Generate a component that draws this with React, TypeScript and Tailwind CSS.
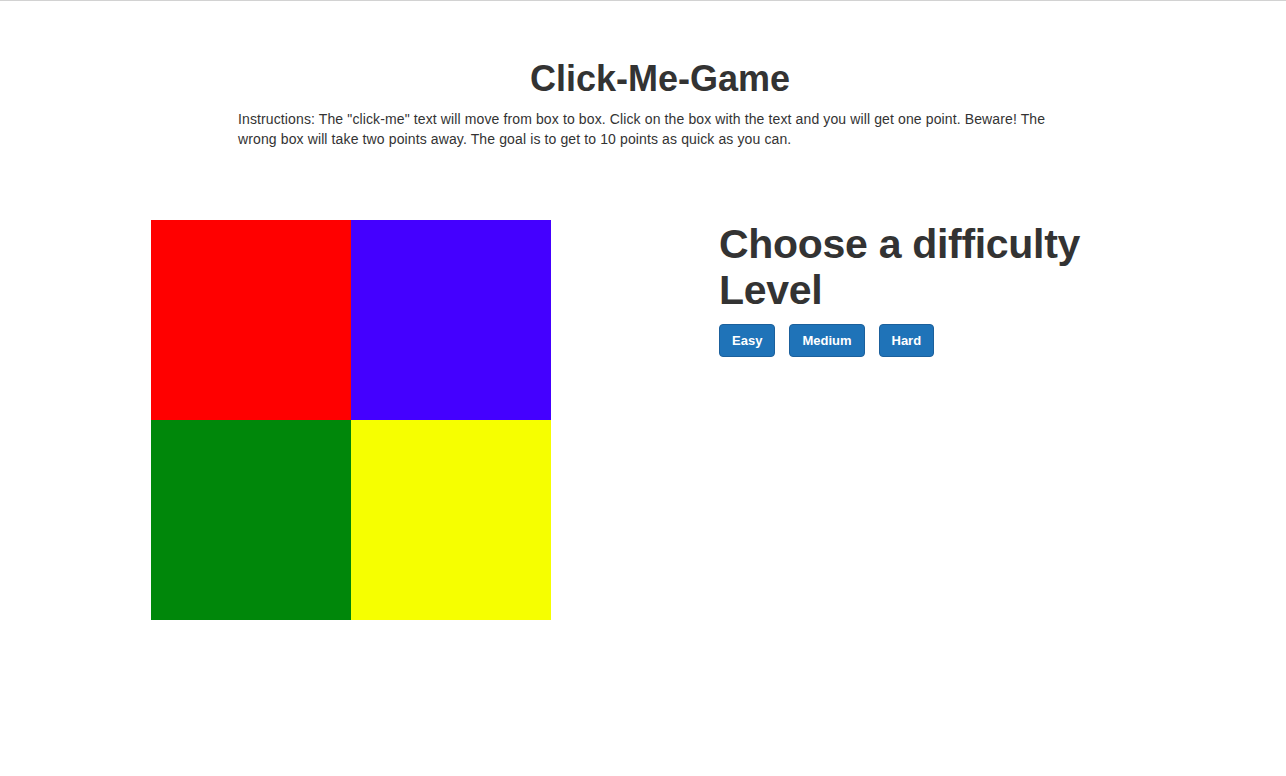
import React from "react";

export default function App() {
  const font = { fontFamily: '"Liberation Sans", Arial, Helvetica, sans-serif' };
  return (
    <div className="min-h-[776px] w-full bg-white text-[#333333] border-t border-[#d2d2d2]" style={font}>
      <div className="w-[844px] pt-[58px] ml-[238px]">
        <h1 className="text-center text-[36px] leading-[40px] font-bold m-0">Click-Me-Game</h1>
        <p className="mt-[10px] text-[14px] leading-[20px] max-w-[840px] tracking-[0.12px]">
          Instructions: The "click-me" text will move from box to box. Click on the box with the text and you will get one point. Beware! The wrong box will take two points away. The goal is to get to 10 points as quick as you can.
        </p>
      </div>
      <div className="flex mt-[71px]">
        <div className="ml-[151px] grid grid-cols-2 w-[400px] h-[400px]">
          <div className="bg-[#ff0000]" />
          <div className="bg-[#4400ff]" />
          <div className="bg-[#00870a]" />
          <div className="bg-[#f6ff00]" />
        </div>
        <div className="ml-[168px] w-[400px]">
          <h2 className="text-[41px] leading-[46px] font-bold mt-[1px] tracking-[-0.3px]">Choose a difficulty Level</h2>
          <div className="flex gap-[14px] mt-[11px]">
            {["Easy", "Medium", "Hard"].map((l) => (
              <button
                key={l}
                className="h-[33px] px-[12px] rounded-[4px] bg-[#1f73b8] border border-[#1b609c] text-white text-[13px] font-bold leading-[20px]"
              >
                {l}
              </button>
            ))}
          </div>
        </div>
      </div>
    </div>
  );
}
